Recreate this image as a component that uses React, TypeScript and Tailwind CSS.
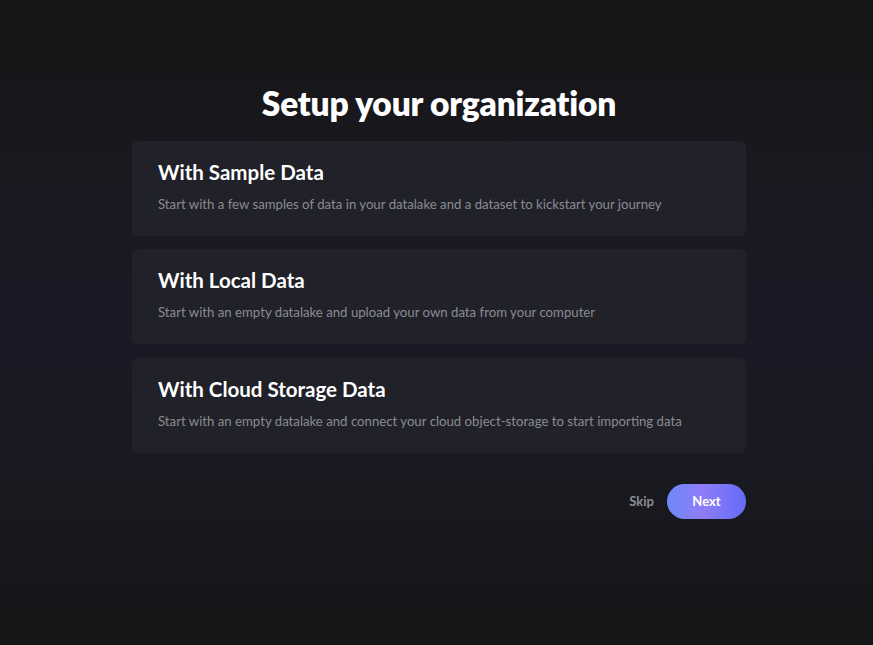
import React from "react";

const options = [
  {
    title: "With Sample Data",
    desc: "Start with a few samples of data in your datalake and a dataset to kickstart your journey",
    mt: "mt-0",
  },
  {
    title: "With Local Data",
    desc: "Start with an empty datalake and upload your own data from your computer",
    mt: "mt-[13px]",
  },
  {
    title: "With Cloud Storage Data",
    desc: "Start with an empty datalake and connect your cloud object-storage to start importing data",
    mt: "mt-[14px]",
  },
];

export default function App() {
  return (
    <div
      className="w-full h-[645px] overflow-hidden bg-[linear-gradient(180deg,#161616_0%,#191922_35%,#1a1a27_50%,#191921_70%,#161618_100%)]"
      style={{ fontFamily: "Lato, 'Noto Sans', sans-serif" }}
    >
      <div className="ml-[132px] w-[614px] pt-[83px] flex flex-col">
        <h1 className="text-center text-[33.5px] leading-[40px] font-extrabold text-white tracking-[-0.2px]">
          Setup your organization
        </h1>
        <div className="mt-[18px] flex flex-col">
          {options.map((o) => (
            <div
              key={o.title}
              className={`${o.mt} h-[95px] rounded-[6px] bg-[#212129] pl-[26px] pt-[19px]`}
            >
              <div className="text-[20.5px] leading-[24px] font-bold text-white">{o.title}</div>
              <div className="mt-[10px] text-[13.2px] leading-[20px] text-[#8b8b93]">{o.desc}</div>
            </div>
          ))}
        </div>
        <div className="mt-[31px] flex justify-end items-center gap-[13px]">
          <button className="text-[13px] font-bold text-[#8c8c92]">Skip</button>
          <button className="w-[79px] h-[35px] rounded-full text-white text-[13px] font-bold bg-[linear-gradient(90deg,#6c8afa_0%,#8f7cf7_45%,#646cf6_100%)]">
            Next
          </button>
        </div>
      </div>
    </div>
  );
}
